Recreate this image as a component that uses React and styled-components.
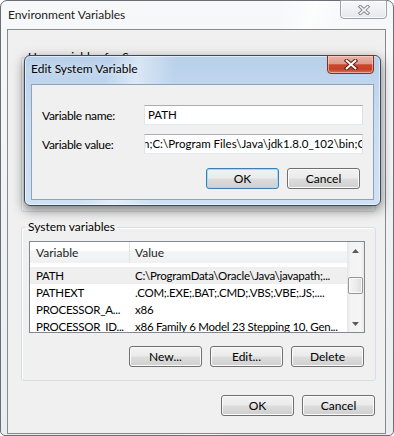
import React from "react";
import styled, { createGlobalStyle } from "styled-components";

const GlobalStyle = createGlobalStyle`
  html, body {
    margin: 0;
    padding: 0;
    background: #ffffff;
  }
  body {
    font-family: Lato, "Noto Sans", sans-serif;
    font-size: 12px;
    color: #000;
  }
`;

const Screen = styled.div`
  position: relative;
  width: 394px;
  height: 436px;
  overflow: hidden;
`;

const Window = styled.div`
  box-sizing: border-box;
  width: 394px;
  height: 436px;
  display: flex;
  flex-direction: column;
  padding: 0 7px 1px 6px;
  border: 1px solid #6a6f75;
  border-radius: 7px 7px 5px 5px;
  background: linear-gradient(105deg, rgba(255, 255, 255, 0) 55%, rgba(255, 255, 255, 0.7) 62%, rgba(255, 255, 255, 0) 70%),
    linear-gradient(180deg, #f7f8fa 0%, #eef1f4 60%, #e9edf1 100%);
`;

const TitleBar = styled.div`
  height: 28px;
  display: flex;
  justify-content: space-between;
  align-items: flex-start;
  flex-shrink: 0;
`;

const Title = styled.span`
  margin-top: ${(p) => p.$top}px;
  padding-left: ${(p) => p.$left}px;
  line-height: 16px;
  font-size: 12px;
  color: ${(p) => (p.$active ? "#000" : "#1c1c1c")};
  text-shadow: 0 0 6px rgba(255, 255, 255, 0.9);
`;

const CaptionClose = styled.div`
  box-sizing: border-box;
  width: 47px;
  height: 19px;
  margin-top: -1px;
  margin-right: ${(p) => p.$right}px;
  display: flex;
  align-items: center;
  justify-content: center;
  border: 1px solid ${(p) => (p.$active ? "#7b3327" : "#9aa1a9")};
  border-radius: 0 0 4px 4px;
  background: ${(p) =>
    p.$active
      ? "linear-gradient(180deg, #eab4a8 0%, #df9a8b 45%, #c9472f 52%, #c5412a 78%, #d8745a 100%)"
      : "linear-gradient(180deg, #f8f9fa 0%, #eef0f3 50%, #e4e8ec 100%)"};
  box-shadow: inset 0 0 0 1px ${(p) => (p.$active ? "rgba(255,220,210,0.55)" : "rgba(255,255,255,0.8)")};
`;

const Content = styled.div`
  flex: 1;
  display: flex;
  flex-direction: column;
  padding: 20px 9px 0 13px;
  border: 1px solid #8a8a8a;
  background: #f0f0f0;
`;

const Group = styled.fieldset`
  box-sizing: border-box;
  margin: ${(p) => p.$gap}px 0 0 0;
  padding: 7px 10px 13px 7px;
  min-width: 0;
  height: ${(p) => p.$height}px;
  border: 1px solid #d5dfe5;
  border-radius: 3px;
  box-shadow: inset 1px 1px 0 #ffffff;
  display: flex;
  flex-direction: column;
`;

const Legend = styled.legend`
  margin-left: -3px;
  padding: 0 2px;
  line-height: 14px;
  font-size: 12px;
  color: #000;
`;

const ListView = styled.div`
  box-sizing: border-box;
  height: 92px;
  display: flex;
  border: 1px solid #828790;
  background: #ffffff;
`;

const ListBody = styled.div`
  flex: 1;
  min-width: 0;
  overflow: hidden;
`;

const HeaderRow = styled.div`
  display: grid;
  grid-template-columns: 100px 1fr;
  height: 21px;
  margin-bottom: 4px;
  background: linear-gradient(180deg, #ffffff 0%, #ffffff 42%, #f4f5f7 43%, #f0f1f3 100%);
`;

const HeaderCell = styled.div`
  padding: 1px 0 0 ${(p) => p.$pad}px;
  line-height: 20px;
  color: #1e1e1e;
  border-right: ${(p) => (p.$sep ? "1px solid #e3e5e9" : "none")};
`;

const Row = styled.div`
  display: grid;
  grid-template-columns: 100px 1fr;
  height: 17px;
  line-height: 17px;
  background: ${(p) => (p.$selected ? "#efefef" : "transparent")};
`;

const Cell = styled.div`
  padding-left: ${(p) => p.$pad}px;
  font-size: 11.5px;
  letter-spacing: -0.25px;
  white-space: nowrap;
  overflow: hidden;
`;

const ScrollBar = styled.div`
  width: 17px;
  display: flex;
  flex-direction: column;
  background: linear-gradient(90deg, #e6e6e6 0%, #f3f3f3 20%, #f5f5f5 80%, #e9e9e9 100%);
`;

const ScrollArrow = styled.div`
  height: 17px;
  display: flex;
  align-items: center;
  justify-content: center;
`;

const Track = styled.div`
  flex: 1;
  padding: 18px 1px 0 1px;
`;

const Thumb = styled.div`
  box-sizing: border-box;
  height: 17px;
  border: 1px solid #979797;
  border-radius: 2px;
  background: linear-gradient(90deg, #f5f5f5 0%, #ececec 50%, #dcdcdc 100%);
  box-shadow: inset 0 0 0 1px #fbfbfb;
`;

const ButtonRow = styled.div`
  display: flex;
  justify-content: flex-end;
  gap: 8px;
  margin-top: ${(p) => p.$top}px;
  margin-right: ${(p) => p.$right}px;
  grid-column: 1 / -1;
`;

const Button = styled.div`
  box-sizing: border-box;
  width: 73px;
  height: 21px;
  display: flex;
  align-items: center;
  justify-content: center;
  font-size: 12px;
  color: #000;
  border: 1px solid ${(p) => (p.$default ? "#3c7fb1" : "#707070")};
  border-radius: 3px;
  background: linear-gradient(180deg, #f2f2f2 0%, #ebebeb 48%, #dddddd 52%, #cfcfcf 100%);
  box-shadow: inset 0 0 0 1px ${(p) => (p.$default ? "#9fdcf8" : "#fbfbfb")};
`;

const Dialog = styled.div`
  position: absolute;
  left: 24px;
  top: 55px;
  box-sizing: border-box;
  width: 357px;
  height: 151px;
  display: flex;
  flex-direction: column;
  padding: 0 6px 6px 6px;
  border: 1px solid #3b4b5d;
  border-radius: 6px;
  background: linear-gradient(100deg, rgba(255, 255, 255, 0) 22%, rgba(255, 255, 255, 0.45) 30%, rgba(255, 255, 255, 0) 40%),
    linear-gradient(180deg, #b8d0ea 0%, #c9ddf2 45%, #cfe1f4 100%);
  box-shadow: inset 0 0 0 1px rgba(255, 255, 255, 0.55), 0 4px 12px rgba(0, 0, 0, 0.5);
`;

const DialogBody = styled.div`
  flex: 1;
  display: grid;
  grid-template-columns: 102px 219px;
  grid-auto-rows: min-content;
  align-items: center;
  row-gap: 9px;
  padding: 20px 10px 10px 10px;
  border: 1px solid #8da2bb;
  background: #f0f0f0;
`;

const FieldLabel = styled.label`
  color: #000;
  font-size: 12px;
  letter-spacing: -0.3px;
`;

const Field = styled.div`
  box-sizing: border-box;
  height: 20px;
  padding: 0 3px;
  font-size: 11.5px;
  line-height: 18px;
  white-space: nowrap;
  overflow: hidden;
  background: #ffffff;
  border: 1px solid;
  border-color: #abadb3 #dbdfe6 #e3e9ef #e2e3ea;
  color: #000;
  text-indent: ${(p) => -(p.$scroll || 0)}px;
`;

const Glyph = styled.svg`
  display: block;
`;

const CloseGlyph = ({ outline, fill, w, h }) => (
  <Glyph width={w} height={h} viewBox="0 0 13 10">
    <g strokeLinecap="square">
      <path d="M2.5 1.5 L10.5 8.5 M10.5 1.5 L2.5 8.5" stroke={outline} strokeWidth="3.8" />
      <path d="M2.5 1.5 L10.5 8.5 M10.5 1.5 L2.5 8.5" stroke={fill} strokeWidth="1.8" />
    </g>
  </Glyph>
);

const Arrow = ({ up }) => (
  <Glyph width="7" height="4" viewBox="0 0 7 4">
    <polygon points={up ? "3.5,0 7,4 0,4" : "0,0 7,0 3.5,4"} fill="#5a5a5a" />
  </Glyph>
);

const rows = [
  { name: "PATH", value: "C:\\ProgramData\\Oracle\\Java\\javapath;...", selected: true },
  { name: "PATHEXT", value: ".COM;.EXE;.BAT;.CMD;.VBS;.VBE;.JS;...." },
  { name: "PROCESSOR_A...", value: "x86" },
  { name: "PROCESSOR_ID...", value: "x86 Family 6 Model 23 Stepping 10, Gen..." },
];

export default function App() {
  return (
    <Screen>
      <GlobalStyle />
      <Window>
        <TitleBar>
          <Title $top={6} $left={1}>Environment Variables</Title>
          <CaptionClose $right={-1}>
            <CloseGlyph outline="#7d8186" fill="#f4f5f6" w={12} h={10} />
          </CaptionClose>
        </TitleBar>
        <Content>
          <Group $height={162} $gap={0}>
            <Legend>User variables for Sam</Legend>
          </Group>
          <Group $height={161} $gap={8}>
            <Legend>System variables</Legend>
            <ListView>
              <ListBody>
                <HeaderRow>
                  <HeaderCell $pad={6} $sep>Variable</HeaderCell>
                  <HeaderCell $pad={5}>Value</HeaderCell>
                </HeaderRow>
                {rows.map((r) => (
                  <Row key={r.name} $selected={r.selected}>
                    <Cell $pad={6}>{r.name}</Cell>
                    <Cell $pad={5}>{r.value}</Cell>
                  </Row>
                ))}
              </ListBody>
              <ScrollBar>
                <ScrollArrow>
                  <Arrow up />
                </ScrollArrow>
                <Track>
                  <Thumb />
                </Track>
                <ScrollArrow>
                  <Arrow />
                </ScrollArrow>
              </ScrollBar>
            </ListView>
            <ButtonRow $top={13} $right={1}>
              <Button>New...</Button>
              <Button>Edit...</Button>
              <Button>Delete</Button>
            </ButtonRow>
          </Group>
          <ButtonRow $top={14} $right={1}>
            <Button>OK</Button>
            <Button>Cancel</Button>
          </ButtonRow>
        </Content>
      </Window>

      <Dialog>
        <TitleBar>
          <Title $top={5} $left={0} $active>Edit System Variable</Title>
          <CaptionClose $active $right={0}>
            <CloseGlyph outline="#5e2218" fill="#ffffff" w={14} h={11} />
          </CaptionClose>
        </TitleBar>
        <DialogBody>
          <FieldLabel>Variable name:</FieldLabel>
          <Field>PATH</Field>
          <FieldLabel>Variable value:</FieldLabel>
          <Field $scroll={5}>n;C:\Program Files\Java\jdk1.8.0_102\bin;C:\Windows\system32</Field>
          <ButtonRow $top={5} $right={3}>
            <Button $default>OK</Button>
            <Button>Cancel</Button>
          </ButtonRow>
        </DialogBody>
      </Dialog>
    </Screen>
  );
}
